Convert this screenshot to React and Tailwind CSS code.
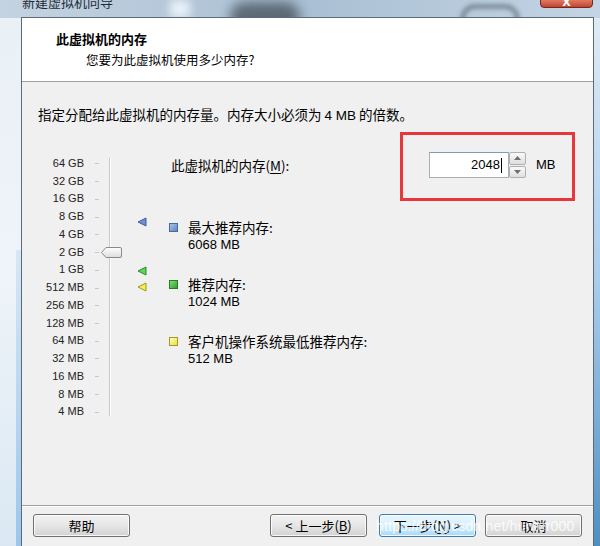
const scale = ["64 GB", "32 GB", "16 GB", "8 GB", "4 GB", "2 GB", "1 GB", "512 MB", "256 MB", "128 MB", "64 MB", "32 MB", "16 MB", "8 MB", "4 MB"];

const items = [
  { color: "bg-gradient-to-br from-[#a9c3e6] to-[#5e86c2] border-[#4a6a9c]", label: "最大推荐内存:", value: "6068 MB" },
  { color: "bg-gradient-to-br from-[#7ee07a] to-[#2f9e2a] border-[#2a7a25]", label: "推荐内存:", value: "1024 MB" },
  { color: "bg-gradient-to-br from-[#fffcb0] to-[#e8e040] border-[#a19a20]", label: "客户机操作系统最低推荐内存:", value: "512 MB" },
];

function Marker({ top, fill, stroke }) {
  return (
    <svg className="absolute left-[15px]" style={{ top }} width="10" height="10" viewBox="0 0 10 10">
      <polygon points="1,5 9,1 9,9" fill={fill} stroke={stroke} strokeWidth="1" strokeLinejoin="round" />
    </svg>
  );
}

function WinButton({ children, focused }) {
  return (
    <div
      className={
        "w-[97px] h-[23px] rounded-[3px] border flex items-center justify-center text-[13px] text-black shadow-[inset_0_0_0_1px_rgba(255,255,255,0.8)] " +
        (focused
          ? "border-[#3c7fb1] bg-gradient-to-b from-[#eaf6fd] via-[#d9f0fc] to-[#a7d9f5]"
          : "border-[#707070] bg-gradient-to-b from-[#f2f2f2] via-[#e6e6e6] to-[#d2d2d2]")
      }
    >
      {children}
    </div>
  );
}

export default function App() {
  return (
    <div className="relative w-[600px] h-[546px] overflow-hidden bg-gradient-to-b from-[#e9f0f6] via-[#eef4f9] to-[#dbe8f3] font-['Noto_Sans_CJK_SC',sans-serif]">
      {/* aero frame */}
      <div className="absolute left-0 top-0 w-[600px] h-[18px] bg-gradient-to-r from-[#c4d3e1] via-[#a9bfd3] to-[#c3d4e4]">
        <div className="absolute left-[230px] top-[2px] w-[70px] h-[30px] rounded-full bg-[#3b4550] blur-[6px] opacity-70" />
        <div className="absolute left-[460px] top-[4px] w-[60px] h-[30px] rounded-full border-[5px] border-[#5a6470] blur-[2px] opacity-60" />
        <div className="absolute left-[170px] top-0 w-[20px] h-[18px] bg-[#e8f0f8] blur-[4px]" />
      </div>
      <div className="absolute left-[16px] top-[250px] w-[6px] h-[296px] bg-gradient-to-b from-[#d7e7f5] to-[#9cc6ec]" />
      <div className="absolute right-0 top-[18px] w-[6px] h-[528px] bg-gradient-to-b from-[#dfeaf4] via-[#a9cdec] to-[#4f8fc0]" />
      <span className="absolute left-[22px] top-[-7px] text-[13px] text-[#202a36] leading-[18px]">新建虚拟机向导</span>
      <div className="absolute left-[540px] top-[-4px] w-[53px] h-[12px] rounded-b-[4px] border border-[#6e2a1f] bg-gradient-to-b from-[#e9907c] to-[#c4412c] flex items-end justify-center">
        <span className="text-white text-[11px] leading-[9px] font-bold font-['DejaVu_Sans',sans-serif]">X</span>
      </div>

      {/* dialog */}
      <div className="absolute left-[21px] top-[17px] w-[573px] h-[540px] border border-[#5d6b78] bg-[#f0f0f0] flex flex-col">
        <div className="h-[64px] bg-white border-b border-[#a0a0a0] shrink-0">
          <div className="pl-[34px] pt-[12px] text-[13px] font-bold leading-[17px] text-black">此虚拟机的内存</div>
          <div className="pl-[64px] pt-[4px] text-[12.5px] leading-[17px] text-black">您要为此虚拟机使用多少内存?</div>
        </div>

        <div className="relative h-[423px] pl-[16px] pt-[23px] shrink-0">
          <div className="text-[13.5px] leading-[18px] text-black">
            指定分配给此虚拟机的内存量。内存大小必须为 <span className="font-['Liberation_Sans']">4 MB</span> 的倍数。
          </div>

          <div className="flex mt-[27px]">
            {/* scale labels */}
            <div className="w-[46px] pt-[3px] flex flex-col items-end font-['Liberation_Sans',sans-serif] text-[11px] text-[#222]">
              {scale.map((s) => (
                <div key={s} className="h-[17.74px] leading-[17.74px] whitespace-nowrap">{s}</div>
              ))}
            </div>
            {/* ticks */}
            <div className="ml-[11px] w-[4px] pt-[3px] flex flex-col">
              {scale.map((s) => (
                <div key={s} className="h-[17.74px] flex items-center">
                  <div className="w-[4px] h-px bg-[#c8c8c8]" />
                </div>
              ))}
            </div>
            {/* track */}
            <div className="relative ml-[2px] w-[21px] h-[270px]">
              <div className="absolute left-[8px] top-[6px] w-[2px] h-[258px] bg-[#c9c9c9] border-r border-white" />
              <svg className="absolute left-0 top-[95px]" width="21" height="11" viewBox="0 0 21 11">
                <defs>
                  <linearGradient id="thumb" x1="0" y1="0" x2="0" y2="1">
                    <stop offset="0" stopColor="#ffffff" />
                    <stop offset="1" stopColor="#dcdcdc" />
                  </linearGradient>
                </defs>
                <path d="M0.5 5.5 L5 0.5 H19 Q20.5 0.5 20.5 2 V9 Q20.5 10.5 19 10.5 H5 Z" fill="url(#thumb)" stroke="#8a8a8a" />
              </svg>
            </div>
            {/* markers */}
            <div className="relative w-[47px] h-[270px]">
              <Marker top={65} fill="#6d8fcf" stroke="#3d5f98" />
              <Marker top={114} fill="#5fd45a" stroke="#2b8a27" />
              <Marker top={130} fill="#f2ee5a" stroke="#9d961c" />
            </div>
            {/* right side */}
            <div className="flex flex-col">
              <div className="flex items-center h-[26px]">
                <div className="w-[260px] pl-[2px] text-[13.5px] text-black">
                  此虚拟机的内存(<span className="underline underline-offset-2">M</span>):
                </div>
                <div className="w-[80px] h-[26px] bg-white border border-[#abadb3] border-t-[#7a9cc0] flex items-center justify-end pr-[6px] font-['Liberation_Sans',sans-serif] text-[13px] text-black">
                  2048<span className="ml-[1px] w-px h-[15px] bg-black" />
                </div>
                <div className="w-[17px] h-[26px] flex flex-col gap-px">
                  <div className="flex-1 border border-[#b0b0b0] rounded-[2px] bg-gradient-to-b from-[#fafafa] to-[#dedede] flex items-center justify-center">
                    <svg width="7" height="4" viewBox="0 0 7 4"><polygon points="0,4 3.5,0 7,4" fill="#6a6f78" /></svg>
                  </div>
                  <div className="flex-1 border border-[#b0b0b0] rounded-[2px] bg-gradient-to-b from-[#fafafa] to-[#dedede] flex items-center justify-center">
                    <svg width="7" height="4" viewBox="0 0 7 4"><polygon points="0,0 7,0 3.5,4" fill="#6a6f78" /></svg>
                  </div>
                </div>
                <div className="ml-[10px] font-['Liberation_Sans',sans-serif] text-[13px] text-black">MB</div>
              </div>

              <div className="mt-[41px] flex flex-col gap-[23px]">
                {items.map((it) => (
                  <div key={it.label} className="flex">
                    <div className={"mt-[4px] w-[9px] h-[9px] border " + it.color} />
                    <div className="ml-[10px] text-[13.5px] leading-[17px] text-black">
                      <div>{it.label}</div>
                      <div className="font-['Liberation_Sans',sans-serif] text-[13px]">{it.value}</div>
                    </div>
                  </div>
                ))}
              </div>
            </div>
          </div>
        </div>

        <div className="border-t border-[#a0a0a0] shadow-[inset_0_1px_0_#ffffff] flex items-start pt-[8px] px-[11px]">
          <WinButton>帮助</WinButton>
          <div className="flex-1" />
          <div className="flex gap-[12px]">
            <WinButton>&lt; 上一步(<span className="underline underline-offset-2">B</span>)</WinButton>
            <WinButton focused>
              下一步(<span className="underline underline-offset-2">N</span>) &gt;
            </WinButton>
            <div className="ml-[-3px]">
              <WinButton>取消</WinButton>
            </div>
          </div>
        </div>
      </div>

      {/* annotation */}
      <div className="absolute left-[400px] top-[132px] w-[175px] h-[69px] border-[3px] border-[#e8373b]" />
      <div className="absolute left-[376px] top-[516px] text-[14px] font-['Liberation_Sans',sans-serif] text-white/80 whitespace-nowrap tracking-[0.2px]">
        https://blog.csdn.net/hunter000
      </div>
    </div>
  );
}
